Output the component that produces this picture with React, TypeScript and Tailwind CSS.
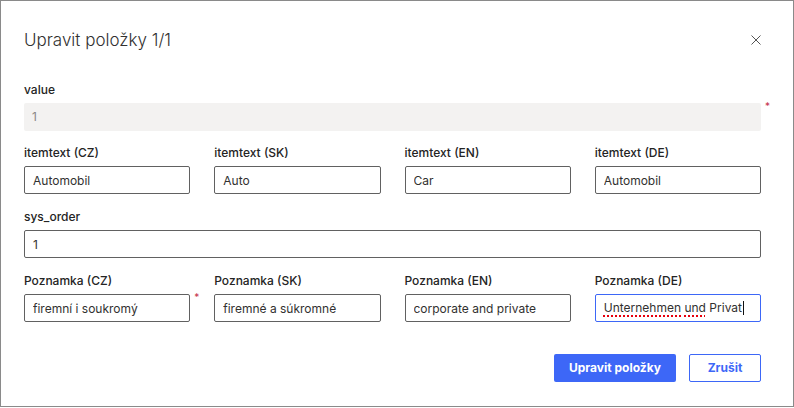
import React from "react";

const LANGS = ["CZ", "SK", "EN", "DE"];

const ITEMTEXT: Record<string, string> = {
  CZ: "Automobil",
  SK: "Auto",
  EN: "Car",
  DE: "Automobil",
};

const NOTES: Record<string, string> = {
  CZ: "firemní i soukromý",
  SK: "firemné a súkromné",
  EN: "corporate and private",
};

function Label({ children }: { children: React.ReactNode }) {
  return (
    <div className="h-4 leading-4 text-[12px] font-medium text-[#242424] mb-[5px]">
      {children}
    </div>
  );
}

function Required() {
  return (
    <span className="absolute left-[calc(100%+4px)] top-[-2px] text-[10px] leading-none text-[#c4314b]">
      *
    </span>
  );
}

function TextInput({ value, required }: { value: string; required?: boolean }) {
  return (
    <div className="relative">
      <input
        readOnly
        value={value}
        className="w-full h-7 px-2 rounded-[2px] border border-[#616161] bg-white text-[12px] text-[#323130] outline-none"
      />
      {required && <Required />}
    </div>
  );
}

// focused field with the spellcheck squiggles and caret
function FocusedInput() {
  const squiggle = "underline decoration-dotted decoration-red-600 decoration-[1.5px] underline-offset-[3px]";
  return (
    <div className="h-7 px-2 rounded-[2px] border border-[#3d67f7] bg-white text-[12px] text-[#323130] flex items-center">
      <span className={squiggle}>Unternehmen</span>
      <span>&nbsp;</span>
      <span className={squiggle}>und</span>
      <span>&nbsp;Privat</span>
      <span className="w-px h-[14px] bg-[#111] ml-px" />
    </div>
  );
}

export default function App() {
  return (
    <div className="w-[794px] h-[408px] bg-white" style={{ fontFamily: "Inter, 'Noto Sans', sans-serif" }}>
      <div className="h-[407px] border border-[#8a8a8a] pl-[23px] pr-[32px] pt-[28px]">
        {/* Header */}
        <div className="flex items-center justify-between h-[22px]">
          <h1 className="text-[17px] leading-[22px] font-light text-[#323130]">Upravit položky 1/1</h1>
          <button className="w-[10px] h-[10px] text-[#555]">
            <svg viewBox="0 0 10 10" width="10" height="10" stroke="currentColor" strokeWidth="1" fill="none">
              <path d="M0.5 0.5 L9.5 9.5 M9.5 0.5 L0.5 9.5" />
            </svg>
          </button>
        </div>

        {/* value */}
        <div className="mt-[31px]">
          <Label>value</Label>
          <div className="relative">
            <div className="h-7 px-2 rounded-[2px] bg-[#f3f2f1] text-[12px] text-[#8a8886] flex items-center">1</div>
            <Required />
          </div>
        </div>

        {/* itemtext */}
        <div className="mt-[14px] grid grid-cols-4 gap-x-6">
          {LANGS.map((l) => (
            <div key={l}>
              <Label>itemtext ({l})</Label>
              <TextInput value={ITEMTEXT[l]} />
            </div>
          ))}
        </div>

        {/* sys_order */}
        <div className="mt-[15px]">
          <Label>sys_order</Label>
          <TextInput value="1" />
        </div>

        {/* notes */}
        <div className="mt-[15px] grid grid-cols-4 gap-x-6">
          {LANGS.map((l) => (
            <div key={l}>
              <Label>Poznamka ({l})</Label>
              {l === "DE" ? <FocusedInput /> : <TextInput value={NOTES[l]} required={l === "CZ"} />}
            </div>
          ))}
        </div>

        {/* Footer */}
        <div className="mt-[32px] flex justify-end gap-[13px]">
          <button className="h-7 w-[122px] rounded-[2px] bg-[#3d67f7] text-white text-[12px] font-bold">
            Upravit položky
          </button>
          <button className="h-7 w-[72px] rounded-[2px] border border-[#3d67f7] bg-white text-[#3d67f7] text-[12px] font-bold">
            Zrušit
          </button>
        </div>
      </div>
    </div>
  );
}
